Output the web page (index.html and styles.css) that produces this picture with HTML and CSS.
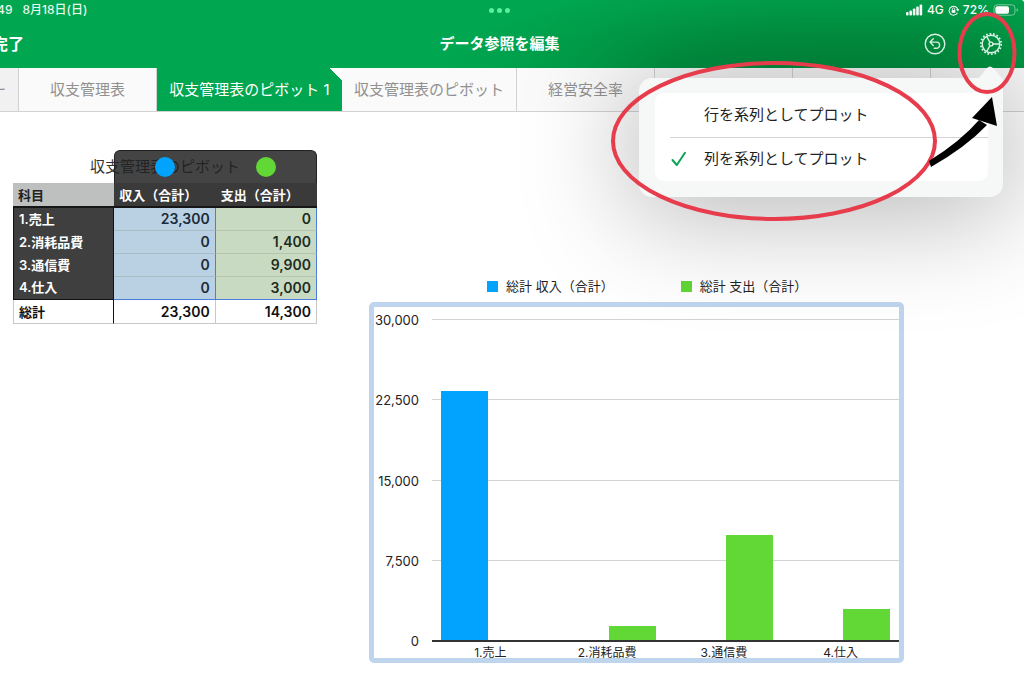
FILE: index.html
```
<!DOCTYPE html>
<html lang="ja">
<head>
<meta charset="utf-8">
<meta name="viewport" content="width=device-width, initial-scale=1">
<title>データ参照を編集</title>
<link rel="stylesheet" href="styles.css">
</head>
<body>
<header class="topbar">
  <div class="status">
    <div class="status-left"><span>49</span><span>8月18日(日)</span></div>
    <div class="status-dots"><i></i><i></i><i></i></div>
    <div class="status-right">
      <svg class="signal" viewBox="0 0 17 12" aria-hidden="true"><rect x="0" y="8" width="2.600" height="3.500" rx="1"/><rect x="3.400" y="6.500" width="2.600" height="5" rx="1"/><rect x="6.800" y="4.500" width="2.600" height="7" rx="1"/><rect x="10.200" y="2.500" width="2.600" height="9" rx="1"/><rect x="13.600" y="0.500" width="2.600" height="11" rx="1"/></svg>
      <span>4G</span>
      <svg class="lock" viewBox="0 0 12 12" aria-hidden="true"><path d="M10.300 8.500A4.800 4.800 0 1 1 10.800 5.500M9.300 4.800l1.500 1.200 1-1.600" fill="none" stroke="#fff" stroke-width="1.100"/><rect x="4" y="5.500" width="4" height="3" fill="#fff"/><path d="M4.800 5.500V4.300a1.200 1.200 0 0 1 2.400 0v1.200" fill="none" stroke="#fff" stroke-width=".8"/></svg>
      <span>72%</span>
      <svg class="battery" viewBox="0 0 26 12" aria-hidden="true"><rect x="1" y=".8" width="21" height="10.400" rx="3.200" fill="none" stroke="#7fc99d"/><rect x="2.400" y="2.200" width="13.600" height="7.600" rx="2" fill="#fff"/><path d="M23.600 4.200v3.600q1.500-.5 1.500-1.800t-1.500-1.800" fill="#7fc99d"/></svg>
    </div>
  </div>
  <div class="nav">
    <button class="done" type="button">完了</button>
    <h1>データ参照を編集</h1>
    <div class="tools">
      <button class="icon-button" type="button" aria-label="取り消す">
        <svg viewBox="0 0 24 24" aria-hidden="true"><circle cx="12" cy="12" r="9.800"/><path d="M10.300 6.800L7 10.100l3.300 3.300M7 10.100h6.500a3.100 3.100 0 0 1 0 6.200h-2.300" stroke-linecap="round" stroke-linejoin="round"/></svg>
      </button>
      <button class="icon-button" type="button" aria-label="設定">
        <svg viewBox="0 0 24 24" aria-hidden="true"><circle cx="12" cy="12" r="8.800"/><circle cx="12" cy="12" r="10.200" stroke-width="1.800" stroke-dasharray="1.700 1.861"/><circle cx="12" cy="12" r="1.900"/><path d="M13.900 12h6.900M11 10.300L7.600 4.400M11 13.700l-3.400 5.900"/></svg>
      </button>
    </div>
  </div>
</header>

<nav class="tabs">
  <button class="tab tab-edge" type="button">ー</button>
  <button class="tab" type="button">収支管理表</button>
  <button class="tab tab-active" type="button">収支管理表のピボット 1</button>
  <button class="tab tab-wide" type="button">収支管理表のピボット</button>
  <button class="tab" type="button">経営安全率</button>
  <button class="tab" type="button" aria-label="シート"></button>
  <button class="tab" type="button" aria-label="シート"></button>
  <button class="tab tab-rest" type="button" aria-label="シート"></button>
</nav>

<main class="canvas">
  <section class="sheet">
    <h2>収支管理表のピボット</h2>
    <div class="series-cap"><i class="dot dot-blue"></i><i class="dot dot-green"></i></div>
    <table class="pivot">
      <thead>
        <tr><th class="corner" scope="col">科目</th><th scope="col">収入（合計）</th><th scope="col">支出（合計）</th></tr>
      </thead>
      <tbody>
        <tr><th scope="row">1.売上</th><td>23,300</td><td>0</td></tr>
        <tr><th scope="row">2.消耗品費</th><td>0</td><td>1,400</td></tr>
        <tr><th scope="row">3.通信費</th><td>0</td><td>9,900</td></tr>
        <tr><th scope="row">4.仕入</th><td>0</td><td>3,000</td></tr>
      </tbody>
      <tfoot>
        <tr><th scope="row">総計</th><td>23,300</td><td>14,300</td></tr>
      </tfoot>
    </table>
  </section>

  <section class="chart">
    <div class="legend">
      <span class="key"><i class="swatch blue"></i>総計 収入（合計）</span>
      <span class="key"><i class="swatch green"></i>総計 支出（合計）</span>
    </div>
    <div class="frame">
      <div class="y-axis"><span>30,000</span><span>22,500</span><span>15,000</span><span>7,500</span><span>0</span></div>
      <div class="plot">
        <div class="lines"><i></i><i></i><i></i><i></i><i></i></div>
        <div class="bars">
          <div class="group"><i class="blue" style="height:77.7%"></i><i class="green" style="height:0%"></i></div>
          <div class="group"><i class="blue" style="height:0%"></i><i class="green" style="height:4.7%"></i></div>
          <div class="group"><i class="blue" style="height:0%"></i><i class="green" style="height:33%"></i></div>
          <div class="group"><i class="blue" style="height:0%"></i><i class="green" style="height:10%"></i></div>
        </div>
      </div>
      <div class="x-axis"><span>1.売上</span><span>2.消耗品費</span><span>3.通信費</span><span>4.仕入</span></div>
    </div>
  </section>
</main>

<div class="popover">
  <svg class="pointer" viewBox="0 0 36 20" aria-hidden="true"><path d="M0 13C9 13 10 8 14 3q4-5 8 0l7 8q2 3 2 9H0z"/></svg>
  <div class="menu" role="menu">
    <button class="item" type="button" role="menuitemradio" aria-checked="false"><span class="check"></span><span class="label">行を系列としてプロット</span></button>
    <button class="item" type="button" role="menuitemradio" aria-checked="true"><span class="check"><svg viewBox="0 0 16 16" aria-hidden="true"><path d="M1.500 9l4.300 5L14 1.800" fill="none" stroke="#0ba356" stroke-width="2" stroke-linecap="round" stroke-linejoin="round"/></svg></span><span class="label">列を系列としてプロット</span></button>
  </div>
</div>

<svg class="marks" viewBox="604 0 420 230" aria-hidden="true">
  <ellipse cx="774" cy="141" rx="161" ry="78"/>
  <ellipse cx="987" cy="53" rx="27.500" ry="39"/>
  <path class="shaft" d="M929 161Q961 141 979 120l8 5Q966 147 931 167z"/>
  <path class="head" d="M992 97l5 29-25-8z"/>
</svg>
</body>
</html>
```
FILE: styles.css
```
* { box-sizing: border-box; }

body {
  position: relative;
  margin: 0;
  min-height: 100vh;
  overflow-x: hidden;
  background: #fff;
  color: #222;
  font-family: Inter, "Noto Sans CJK JP", sans-serif;
  font-size: 13px;
}

button {
  margin: 0;
  padding: 0;
  border: 0;
  background: none;
  color: inherit;
  font: inherit;
}

h1, h2 { margin: 0; font-weight: 400; }

i { display: block; }

.blue { background: #02a2ff; }
.green { background: #61d836; }

/* Top bar */
.topbar {
  border-top-right-radius: 3px;
  background: radial-gradient(ellipse 400px 90px at calc(100% - 180px) 100%, rgba(0, 112, 40, .45), rgba(0, 112, 40, .35) 40%, rgba(0, 112, 40, 0)) #00a650;
  color: #fff;
}

.status, .nav {
  display: grid;
  grid-template-columns: 1fr auto 1fr;
  align-items: center;
}

.status {
  height: 20px;
  padding-right: 25px;
  font-size: 12px;
  font-weight: 500;
  line-height: 16px;
  color: #e6f7ec;
}

.status-left { display: flex; gap: 10px; margin-left: -3px; }

.status-dots { display: flex; gap: 3px; }
.status-dots i { width: 5px; height: 5px; border-radius: 50%; background: #5cf09c; }

.status-right {
  display: flex;
  align-items: center;
  justify-content: flex-end;
  gap: 4px;
  margin-right: -20px;
  color: #fff;
}

.signal { width: 17px; height: 12px; fill: #fff; }
.lock { width: 11px; height: 11px; }
.battery { width: 26px; height: 12px; }

.nav { height: 48px; padding-right: 25px; }
.nav h1 { font-size: 15px; font-weight: 700; line-height: 24px; }
.done { justify-self: start; margin-left: -8px; font-size: 16px; font-weight: 700; line-height: 24px; }

.tools { display: flex; justify-content: flex-end; gap: 32px; margin-right: -4px; }
.icon-button { width: 24px; height: 24px; }
.icon-button svg {
  display: block;
  width: 24px;
  height: 24px;
  fill: none;
  stroke: #e6fff0;
  stroke-width: 1.4;
}

/* Sheet tabs */
.tabs {
  display: flex;
  height: 44px;
  overflow: hidden;
  border-bottom: 1px solid #d2d2d2;
  background: #fafafa;
}

.tab {
  flex: 0 0 138px;
  overflow: hidden;
  border-right: 1px solid #d2d2d2;
  color: #919191;
  font-size: 15px;
  line-height: 20px;
  white-space: nowrap;
}

.tab-edge { display: flex; flex-basis: 19px; align-items: center; justify-content: flex-end; padding-right: 12px; background: #f1f1f1; }
.tab-wide { flex-basis: 175px; }
.tab-rest { flex: 1 0 93px; border-right: 0; }
.tab-active {
  flex-basis: 185px;
  border-right: 0;
  background: linear-gradient(45deg, #00a650 calc(100% - 9px), #fff calc(100% - 9px));
  color: #fff;
}

/* Canvas */
.canvas { display: flex; align-items: flex-start; padding: 38px 120px 14px 13px; }

.sheet { position: relative; flex: 0 0 304px; }
.sheet h2 { font-size: 15px; line-height: 33px; text-align: center; color: #333; }

.series-cap {
  position: absolute;
  top: 0;
  right: 0;
  width: 203px;
  height: 33px;
  display: flex;
  align-items: center;
  justify-content: space-around;
  border: 1px solid #222;
  border-bottom: 0;
  border-radius: 6px 6px 0 0;
  background: rgba(32, 32, 32, .84);
}

.dot { width: 20px; height: 20px; border-radius: 50%; }
.dot-blue { background: #02a2ff; }
.dot-green { background: #61d836; }

.pivot {
  width: 100%;
  border-spacing: 0;
  table-layout: fixed;
  background: #3d3d3d;
  font-size: 13px;
  font-weight: 600;
  line-height: 18px;
}

.pivot th, .pivot td { height: 23px; padding: 0 5px; white-space: nowrap; }
.pivot th { text-align: left; font-weight: 600; }
.pivot tbody th { padding-bottom: 2px; }
.pivot td { text-align: right; font-size: 14px; border-bottom: 1px solid #a9bdc6; }
.pivot thead th { height: 25px; background: #3a3a3a; color: #fff; border-bottom: 2px solid #161616; }
.pivot thead .corner { background: #bdc0bf; color: #222; }
.pivot tbody th { background: #3f3f3f; color: #fff; border-left: 1px solid #111; border-right: 1px solid #111; }
.pivot tbody td { background: #b9d1e2; color: #1c2b3a; border-right: 1px solid #4a7ddc; }
.pivot tbody td:last-child { background: #c8dbc2; color: #1e2b1e; border-bottom-color: #b4c6b0; }
.pivot tbody tr:last-child td { border-bottom-color: #4a7ddc; }
.pivot tbody tr:last-child th { border-bottom: 1px solid #111; }
.pivot tfoot th, .pivot tfoot td {
  height: 24px;
  background: #fff;
  color: #111;
  border-right: 1px solid #c8c8c8;
  border-bottom: 1px solid #c8c8c8;
}
.pivot tfoot th { border-left: 1px solid #c8c8c8; border-right-color: #111; }

/* Chart */
.chart { flex: 1; min-width: 0; margin-left: 52px; padding-top: 126px; }

.legend { display: flex; gap: 67px; height: 26px; padding-left: 118px; line-height: 20px; white-space: nowrap; }
.key { display: flex; align-items: center; gap: 8px; height: 20px; }
.swatch { width: 11px; height: 11px; }

.frame {
  display: grid;
  grid-template-columns: 58px 1fr;
  border: 5px solid #bfd5ed;
  border-radius: 5px;
}

.y-axis {
  grid-row: 1;
  display: flex;
  flex-direction: column;
  justify-content: space-between;
  height: 341px;
  margin-top: 3px;
  padding-right: 13px;
  font-size: 13px;
  line-height: 20px;
  text-align: right;
  white-space: nowrap;
}

.plot { display: grid; margin: 12px 0 9px; }
.lines, .bars { grid-area: 1 / 1; }
.lines { display: flex; flex-direction: column; justify-content: space-between; }
.lines i { height: 1px; background: #d3d3d3; }
.lines i:last-child { height: 2px; background: #333; z-index: 1; }

.bars { display: grid; grid-template-columns: repeat(4, 1fr); padding-bottom: 1px; }
.group { display: flex; align-items: flex-end; justify-content: space-between; padding: 0 8%; }
.group i { width: 48%; }

.x-axis {
  grid-column: 2;
  display: grid;
  grid-template-columns: repeat(4, 1fr);
  height: 7px;
  font-size: 12px;
  line-height: 20px;
  text-align: center;
}
.x-axis span { margin-top: -8px; }

/* Popover menu */
.popover {
  position: absolute;
  top: 78px;
  right: 21px;
  width: 364px;
  padding: 15px 15px 16px 16px;
  border-radius: 13px 0 13px 13px;
  background: #f6f8f8;
  box-shadow: 0 10px 110px 10px rgba(0, 0, 0, .28);
}

.pointer { position: absolute; top: -12px; right: -5px; width: 36px; height: 20px; fill: #f6f8f8; }

.menu { position: relative; overflow: hidden; border-radius: 9px; background: #fff; }

.item {
  display: flex;
  align-items: center;
  width: 100%;
  height: 44px;
  padding-left: 16px;
  font-size: 15px;
  line-height: 20px;
  text-align: left;
}
.check { display: flex; width: 33px; }
.check svg { width: 16px; height: 16px; }
.label { flex: 1; }
.item + .item { background: linear-gradient(#d4d4d4, #d4d4d4) 15px 0 / 100% 1px no-repeat; }

/* Hand-drawn marks */
.marks { position: absolute; top: 0; right: 0; width: 420px; height: 230px; pointer-events: none; }
.marks ellipse { fill: none; stroke: #e63c4c; stroke-width: 4; }
.marks .shaft, .marks .head { fill: #000; }
```
